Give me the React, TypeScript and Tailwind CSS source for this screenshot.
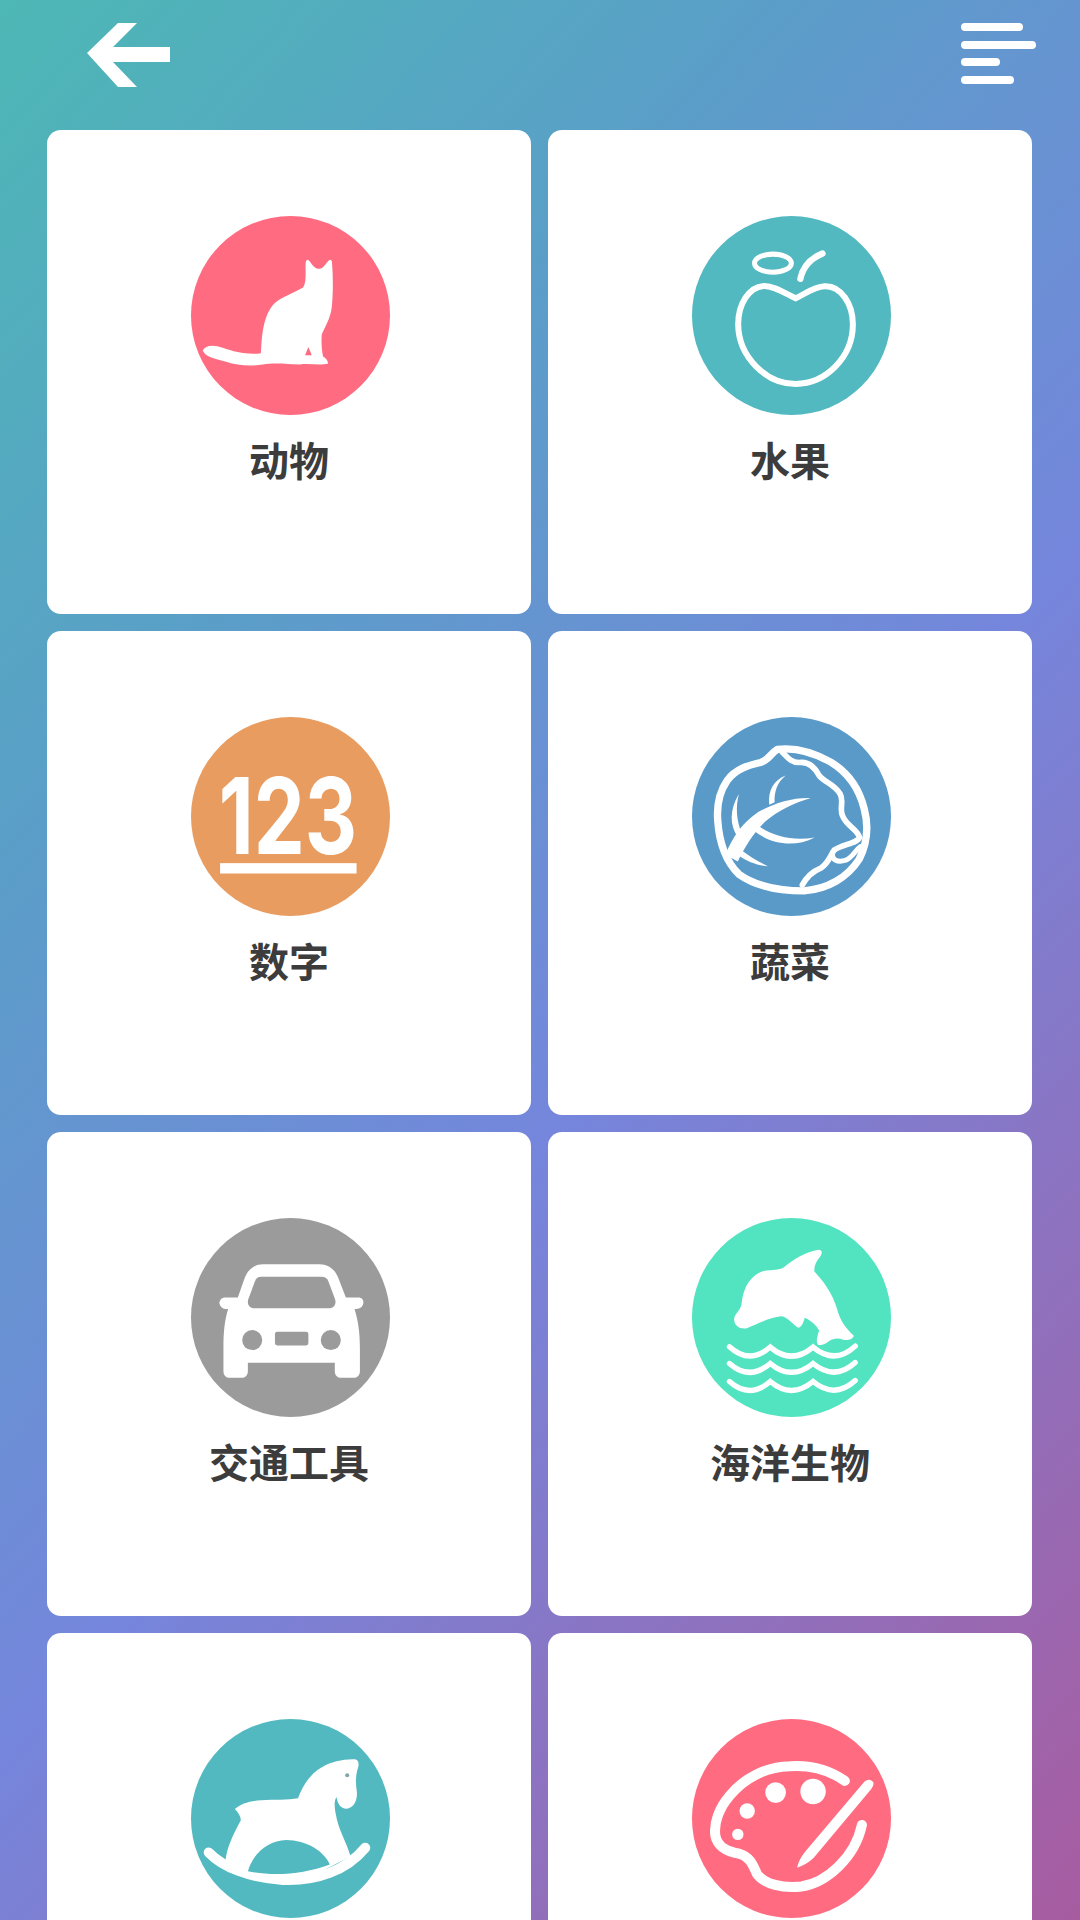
const Cat = () => (
  <svg viewBox="65 48 595 595" className="w-full h-full">
    <path
      fill="#fff"
      d="M100 450C108 434 132 432 160 442C195 455 240 464 274 458C276 410 280 360 302 325C322 292 368 282 400 262C412 245 406 210 408 186C410 176 416 176 422 186C430 198 438 206 450 206C462 204 470 186 478 180C485 176 487 184 487 192C490 235 490 280 486 320C482 355 466 378 456 402C454 425 456 452 460 468C468 474 476 480 474 490C450 496 420 488 390 492C350 490 310 486 280 492C245 498 205 496 170 484C140 474 110 472 100 450Z"
    />
    <path fill="#ff6b80" d="M416 440L426 464L406 464Z" />
  </svg>
);

const Apple = () => (
  <svg viewBox="68 48 595 595" className="w-full h-full" fill="none" stroke="#fff" strokeLinecap="round">
    <path
      strokeWidth="18"
      d="M378 294C345 278 312 256 282 257C238 260 206 312 206 372C207 470 290 550 378 550C468 550 549 470 549 372C549 312 514 256 465 258C430 260 405 282 378 294Z"
    />
    <ellipse cx="310" cy="189" rx="55" ry="27" strokeWidth="15" />
    <path strokeWidth="19" d="M392 236C398 205 420 176 458 160" />
  </svg>
);

const Numbers = () => (
  <svg viewBox="65 50 595 595" className="w-full h-full overflow-visible">
    <text
      x="148"
      y="460"
      fill="#fff"
      fontSize="318"
      fontWeight="700"
      fontFamily="Inter, sans-serif"
      textLength="414"
      lengthAdjust="spacingAndGlyphs"
    >
      123
    </text>
    <rect x="152" y="487" width="408" height="31" fill="#fff" />
  </svg>
);

const Cabbage = () => (
  <svg viewBox="65 50 595 595" className="w-full h-full" fill="none" stroke="#fff" strokeLinecap="round" strokeLinejoin="round">
    <path
      strokeWidth="22"
      d="M320 147C300 158 296 178 270 186C235 194 195 205 170 240C148 272 138 310 142 360C146 420 165 480 205 520C250 552 320 570 400 570C470 565 530 530 565 475C590 425 592 370 580 325C565 265 530 215 480 185C435 160 375 140 320 147Z"
    />
    <path
      strokeWidth="17"
      d="M335 155C350 170 360 186 385 186C412 182 432 200 445 225C460 245 490 250 508 280C520 300 505 325 515 345C525 375 560 385 566 410C560 428 515 430 490 448C478 465 475 485 450 502C425 512 410 525 395 552"
    />
    <path strokeWidth="15" d="M485 455C482 478 500 486 525 478C545 470 552 450 568 438" />
    <path
      fill="#fff"
      stroke="none"
      d="M165 462C188 405 218 365 262 335C308 308 365 290 420 292C372 306 325 328 285 362C250 395 225 435 202 482Z"
    />
    <path fill="#fff" stroke="none" d="M205 280C178 325 176 375 203 410L214 398C198 360 195 320 205 280Z" />
    <path fill="#fff" stroke="none" d="M345 225C308 240 292 270 296 312L312 305C310 275 320 245 345 225Z" />
    <path fill="#fff" stroke="none" d="M250 390C300 430 370 442 432 410C370 422 310 408 264 376Z" />
    <path fill="#fff" stroke="none" d="M205 464C230 482 260 494 292 496C262 482 235 466 212 448Z" />
  </svg>
);

const Car = () => (
  <svg viewBox="65 52 595 595" className="w-full h-full">
    <path
      fill="#fff"
      d="M280 190H450C475 190 495 205 505 230L528 290H565C578 290 582 300 580 308C578 318 570 324 560 324H554C565 360 570 395 570 440V510C570 522 562 530 550 530H515C503 530 495 522 495 510V485H235V510C235 522 227 530 215 530H182C170 530 162 522 162 510V440C162 395 165 360 176 324H168C158 324 152 316 150 308C150 298 156 290 168 290H205L226 230C236 205 255 190 280 190Z"
    />
    <path
      fill="#9b9b9b"
      d="M275 228H455C465 228 472 232 476 242L496 296C500 310 492 322 478 322H254C240 322 232 310 236 296L256 242C260 232 265 228 275 228Z"
    />
    <circle cx="248" cy="417" r="30" fill="#9b9b9b" />
    <circle cx="483" cy="417" r="30" fill="#9b9b9b" />
    <rect x="316" y="392" width="100" height="41" rx="7" fill="#9b9b9b" />
  </svg>
);

const Dolphin = () => (
  <svg viewBox="68 52 595 595" className="w-full h-full">
    <path
      fill="#fff"
      d="M194 352C198 336 212 330 216 310C220 270 234 232 272 214C296 204 320 212 342 200C368 178 405 154 445 147C458 147 458 156 452 166C440 180 432 195 434 212C458 238 488 275 502 325C510 355 525 380 552 404C548 416 534 418 520 416C505 410 490 412 478 420C468 428 456 434 446 432C436 424 444 402 448 388C440 372 422 358 405 350C402 362 398 376 386 380C370 372 355 348 335 346C300 350 262 368 232 382C212 386 192 374 194 352Z"
    />
    <g fill="none" stroke="#fff" strokeWidth="16" strokeLinecap="round">
      <path d="M180 437Q240 492 302 438Q365 492 430 438Q495 492 556 435" />
      <path d="M180 487Q240 540 302 487Q365 540 430 487Q495 540 556 484" />
      <path d="M180 541Q240 594 302 541Q365 594 430 541Q495 594 556 538" />
    </g>
  </svg>
);

const Horse = () => (
  <svg viewBox="65 57 595 595" className="w-full h-full">
    <path
      fill="#fff"
      d="M196 326C215 310 240 302 275 300C315 297 355 300 385 294C398 258 420 222 455 202C485 184 525 176 558 178C568 182 568 195 562 210C557 230 557 250 561 275C563 302 550 324 530 325C512 324 504 312 500 290C492 302 494 322 498 342C505 387 530 425 542 468L420 530L240 520L168 480C173 440 190 405 214 360C214 348 206 336 196 326Z"
    />
    <path
      fill="none"
      stroke="#fff"
      strokeWidth="30"
      strokeLinecap="round"
      d="M118 456C160 500 240 532 340 538C440 542 530 510 586 442"
    />
    <path
      fill="#53b9c0"
      d="M235 512C250 460 295 420 350 419C410 420 460 450 480 492C400 522 310 528 235 512Z"
    />
    <circle cx="532" cy="225" r="6" fill="#7fa6ad" />
  </svg>
);

const Palette = () => (
  <svg viewBox="68 55 595 595" className="w-full h-full">
    <path
      fill="none"
      stroke="#fff"
      strokeWidth="30"
      strokeLinecap="round"
      strokeLinejoin="round"
      d="M525 240C480 208 420 192 360 196C290 198 225 230 180 285C150 320 132 365 138 405C146 440 175 452 210 458C240 466 250 490 262 518C285 550 340 562 395 556C470 545 555 470 576 372"
    />
    <circle cx="430" cy="272" r="38" fill="#fff" />
    <circle cx="318" cy="275" r="31" fill="#fff" />
    <circle cx="233" cy="330" r="23" fill="#fff" />
    <circle cx="205" cy="400" r="17" fill="#fff" />
    <path
      fill="#fff"
      d="M582 244C590 234 604 234 610 244C612 250 610 256 604 264L432 470C418 484 400 494 382 500C386 482 396 464 408 450Z"
    />
  </svg>
);

const items = [
  { label: "动物", color: "bg-[#ff6b80]", icon: <Cat /> },
  { label: "水果", color: "bg-[#53b9c0]", icon: <Apple /> },
  { label: "数字", color: "bg-[#e89c60]", icon: <Numbers /> },
  { label: "蔬菜", color: "bg-[#5a9ac9]", icon: <Cabbage /> },
  { label: "交通工具", color: "bg-[#9b9b9b]", icon: <Car /> },
  { label: "海洋生物", color: "bg-[#52e3c0]", icon: <Dolphin /> },
  { label: "", color: "bg-[#53b9c0]", icon: <Horse /> },
  { label: "", color: "bg-[#ff6b80]", icon: <Palette /> },
];

export default function App() {
  return (
    <div className="h-[1920px] overflow-hidden bg-[linear-gradient(132deg,#4db8b5_0%,#5a9fc8_27%,#7586dc_56%,#a85ca0_100%)] font-['Noto_Sans_CJK_SC','Noto_Sans',sans-serif]">
      {/* Top bar */}
      <div className="h-[130px] flex justify-between pl-[86px] pr-[44px] pt-[22px]">
        <svg viewBox="0 0 85 65" className="w-[85px] h-[65px]">
          <path fill="#fff" d="M1 31L32 1H51L27 25H84V40H27L51 65H32Z" />
        </svg>
        <div className="w-[75px] flex flex-col gap-[9.5px] pt-px">
          <div className="w-[62px] h-2 rounded-full bg-white" />
          <div className="w-[75px] h-2 rounded-full bg-white" />
          <div className="w-[39px] h-2 rounded-full bg-white" />
          <div className="w-[53px] h-2 rounded-full bg-white" />
        </div>
      </div>

      {/* Category cards */}
      <div className="grid grid-cols-2 gap-[17px] pl-[47px] pr-[48px]">
        {items.map((item, i) => (
          <div key={i} className="h-[484px] bg-white rounded-[14px] flex flex-col items-center pt-[86px]">
            <div className={`ml-[2px] w-[199px] h-[199px] rounded-full ${item.color}`}>{item.icon}</div>
            {item.label && (
              <div className="mt-[20px] text-[40px] leading-[48px] font-bold text-[#3c3c3c]">{item.label}</div>
            )}
          </div>
        ))}
      </div>
    </div>
  );
}
